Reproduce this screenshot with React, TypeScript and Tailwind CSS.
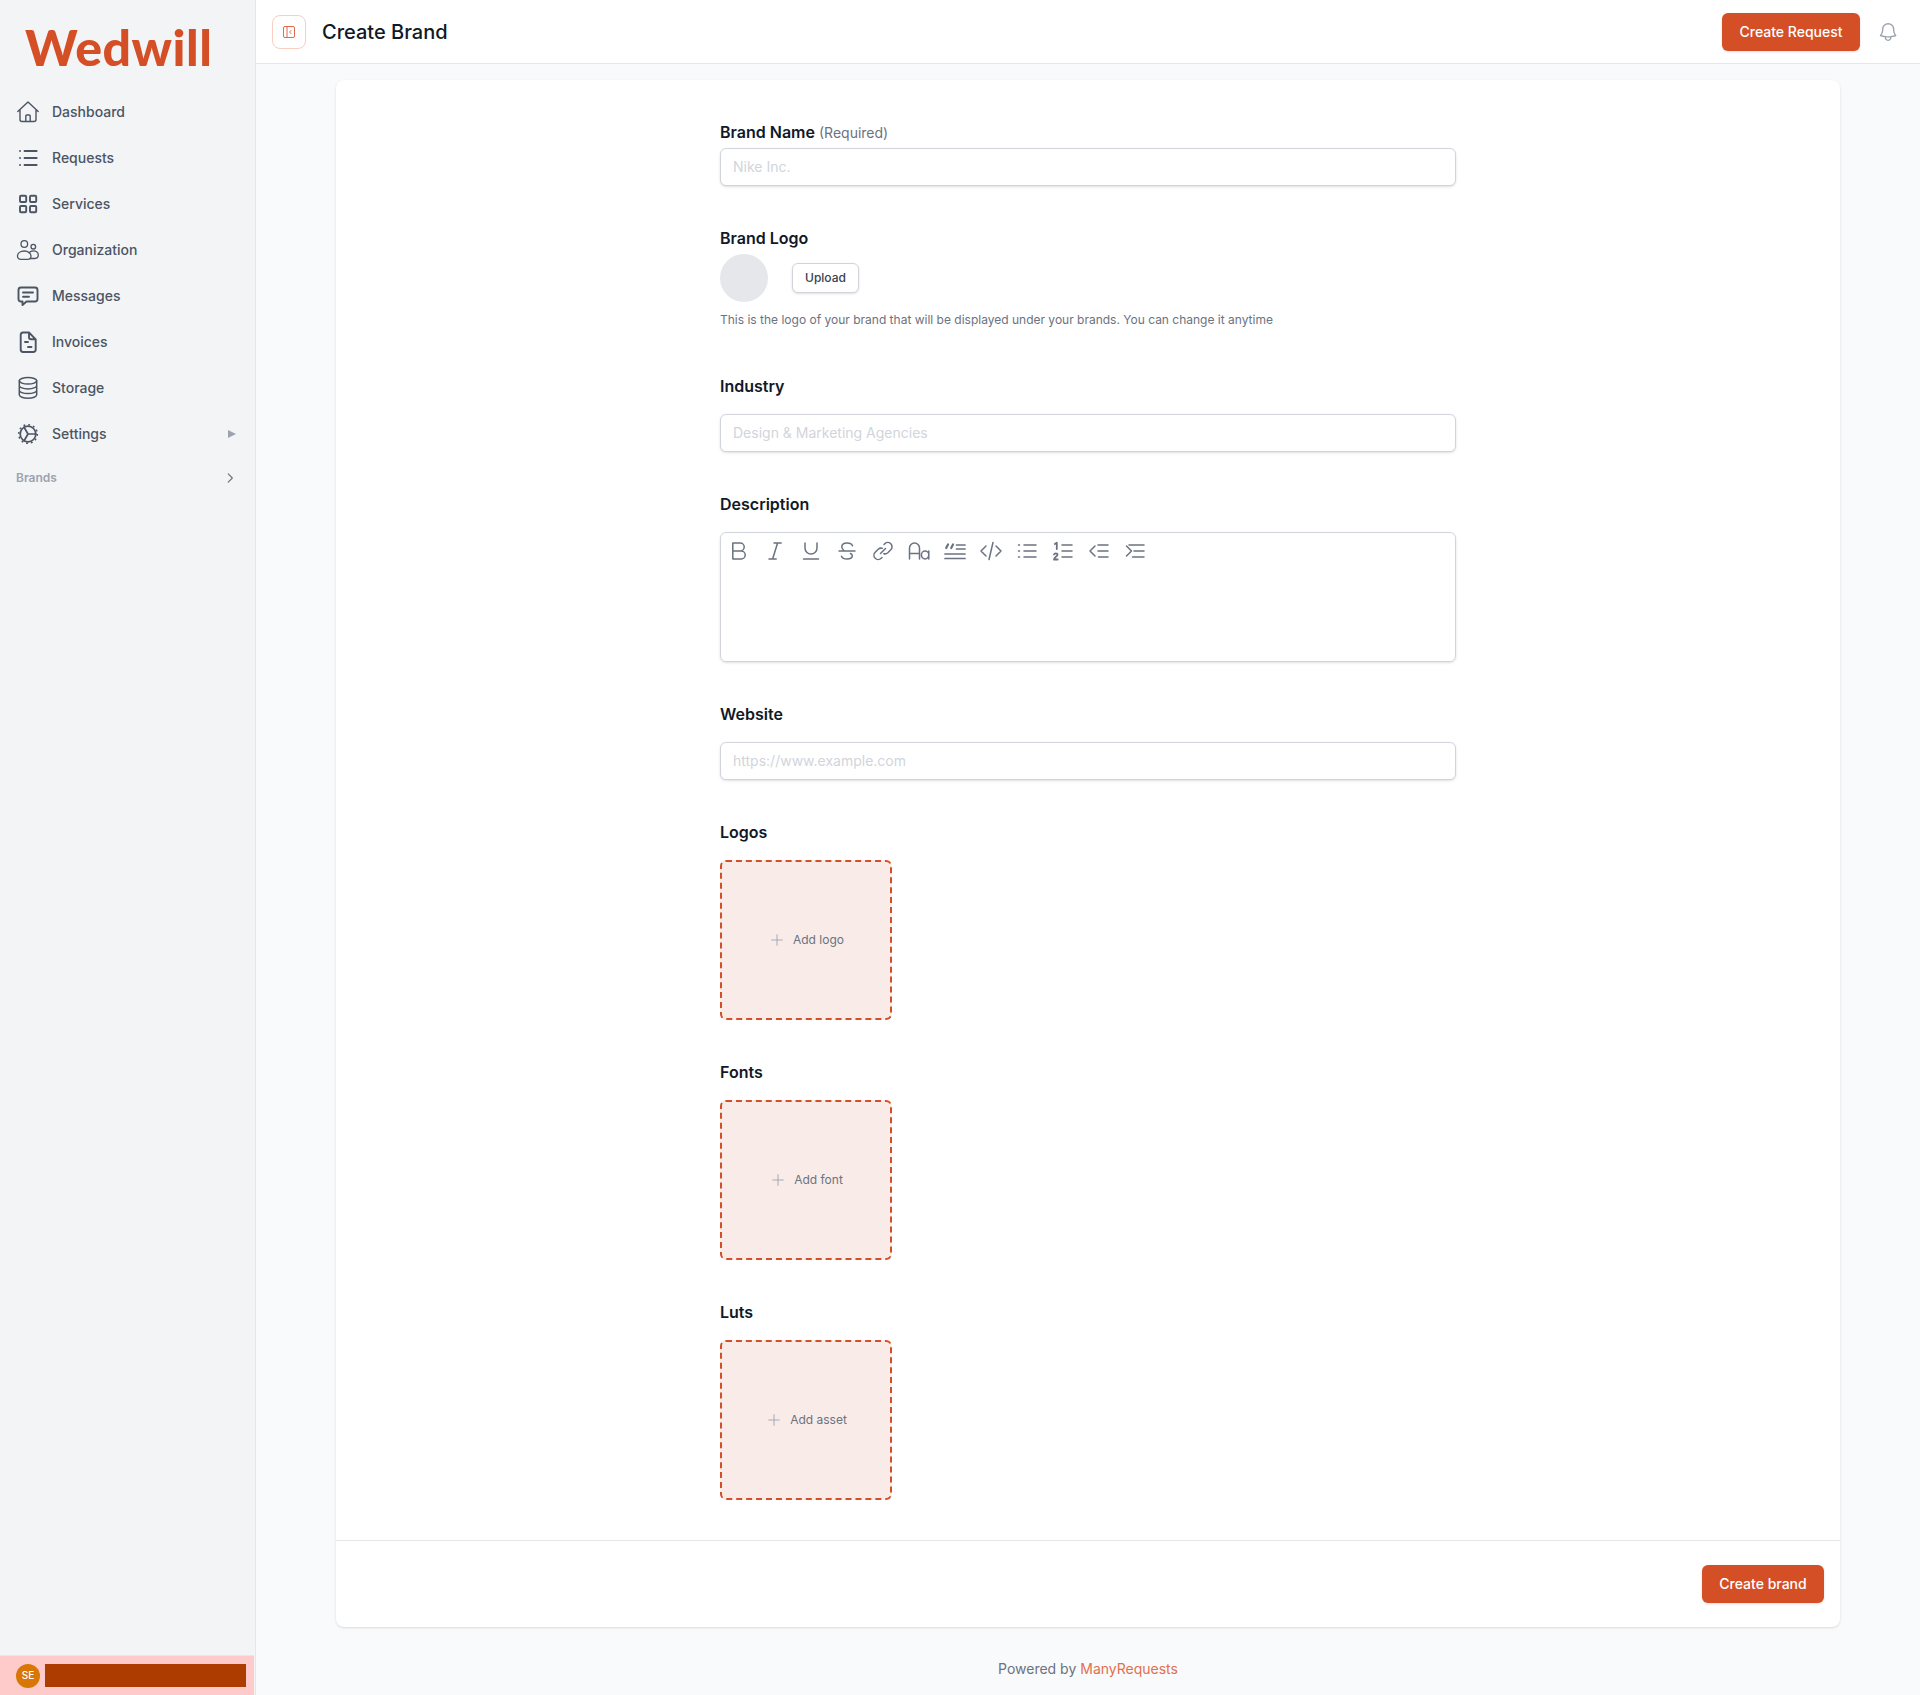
import type { ReactNode } from "react";
import { Plus } from "lucide-react";

const stroke = {
  fill: "none",
  stroke: "currentColor",
  strokeLinecap: "round" as const,
  strokeLinejoin: "round" as const,
};

const Icon = ({ children, className = "w-6 h-6", width = 1.5 }: { children: ReactNode; className?: string; width?: number }) => (
  <svg viewBox="0 0 24 24" className={className} {...stroke} strokeWidth={width}>
    {children}
  </svg>
);

const navItems: { label: string; icon: ReactNode; arrow?: boolean }[] = [
  {
    label: "Dashboard",
    icon: (
      <Icon width={1.4}>
        <path d="M1.800 11.500 12 2l10.200 9.500M4 9.500v10c0 1.100.9 2 2 2h12c1.100 0 2-.9 2-2v-10M9.800 21.500V16c0-.5.4-1 1-1h2.400c.6 0 1 .5 1 1v5.500" />
      </Icon>
    ),
  },
  {
    label: "Requests",
    icon: (
      <Icon width={1.8}>
        <path d="M8.500 5h12.200M8.500 12h12.200M8.500 19h12.200M4 5h.1M4 12h.1M4 19h.1" />
      </Icon>
    ),
  },
  {
    label: "Services",
    icon: (
      <Icon width={1.9}>
        <rect x="4" y="3.800" width="6.200" height="6.200" rx="1" />
        <rect x="14" y="3.800" width="6.200" height="6.200" rx="1" />
        <rect x="4" y="14" width="6.200" height="6.200" rx="1" />
        <rect x="14" y="14" width="6.200" height="6.200" rx="1" />
      </Icon>
    ),
  },
  {
    label: "Organization",
    icon: (
      <Icon width={1.3}>
        <circle cx="8.300" cy="6" r="3.300" />
        <circle cx="17.300" cy="8.700" r="2.300" />
        <path d="M1.500 18.200c0-3 2.800-5.200 6.800-5.200 3.700 0 6.700 2.300 6.700 5.300 0 1.900-1.300 3-3.300 3H5c-2.100 0-3.500-1.200-3.500-3.100Z" />
        <path d="M13 14.700c1-1.100 2.500-1.900 4.300-1.900 2.800 0 5 1.900 5 4.300 0 2-1.300 3.400-3.400 3.400h-4.700" />
      </Icon>
    ),
  },
  {
    label: "Messages",
    icon: (
      <Icon width={1.9}>
        <path d="M5 3.500h14c1.400 0 2.500 1.100 2.500 2.500v9c0 1.400-1.100 2.500-2.500 2.500h-8.500L6.500 21v-3.500H5A2.500 2.500 0 0 1 2.500 15V6C2.500 4.600 3.600 3.500 5 3.500Z" />
        <path d="M7 8.500h10M7 12.800h6" />
      </Icon>
    ),
  },
  {
    label: "Invoices",
    icon: (
      <Icon width={1.9}>
        <path d="M13 2.500H7A2.500 2.500 0 0 0 4.700 5v14.500A2.500 2.500 0 0 0 7 22h10.200a2.500 2.500 0 0 0 2.500-2.500V9.300L13 2.500ZM13 2.500v4.800c0 1.100.9 2 2 2h4.700M9 12h3M12 17h3.500" />
      </Icon>
    ),
  },
  {
    label: "Storage",
    icon: (
      <Icon width={1.5}>
        <ellipse cx="12" cy="4.800" rx="8.700" ry="3.300" />
        <path d="M3.300 4.800v14c0 1.900 3.900 3.400 8.700 3.400s8.700-1.500 8.700-3.400v-14M3.300 9.500c0 1.900 3.900 3.400 8.700 3.400s8.700-1.500 8.700-3.400M3.300 14.200c0 1.900 3.900 3.400 8.700 3.400s8.700-1.500 8.700-3.400" />
      </Icon>
    ),
  },
  {
    label: "Settings",
    icon: (
      <Icon width={1.7}>
        <circle cx="12" cy="12" r="7.800" />
        <circle cx="12" cy="12" r="9.300" strokeDasharray="1.800 3.070" strokeLinecap="butt" strokeWidth={1.600} />
        <path d="M12 12h7.800M12 12 8.100 5.300M12 12l-3.900 6.700" />
      </Icon>
    ),
    arrow: true,
  },
];

const toolbar: ReactNode[] = [
  <path key="b" d="M5.800 4h7.400a4 4 0 0 1 0 8H5.800V4Zm0 8h8.400a4 4 0 0 1 0 8H5.800v-8Z" />,
  <path key="i" d="M11 4h7.200M6 20h7.200M14.600 4 9.600 20" />,
  <path key="u" d="M6 4v5a6 6 0 0 0 12 0V4M4.500 20h15" />,
  <path key="s" d="M17.500 6.800C16.800 5 14.800 4 12 4 9 4 6.800 5.500 6.800 7.800c0 1.700.9 3 2.700 4.200M4 12h16M15.500 14.500c1.200.7 1.800 1.500 1.800 2.300 0 2-2.200 3.200-5.300 3.200-2.800 0-4.800-1-5.500-2.800" />,
  <path key="l" d="M13 5.500l.8-.8a4.200 4.200 0 0 1 6 6l-3 3a4.200 4.200 0 0 1-4 1M11 18.500l-.8.8a4.200 4.200 0 0 1-6-6l3-3a4.200 4.200 0 0 1 4-1M9.500 14.500l5-5" />,
  <path key="a" d="M2.500 20V9a5 5 0 0 1 10 0v11M2.500 14.500h10M21.800 12v8M21.800 16a3.700 3.900 0 1 1-7.400 0 3.700 3.900 0 0 1 7.400 0Z" />,
  <g key="q">
    <path strokeWidth={1.700} d="M13.500 6h8.500M13.500 10h8.500M2 15h20M2 19.500h20" />
    <path strokeWidth={2.200} d="M3.200 9 5 5.500M8.200 9 10 5.500" />
  </g>,
  <path key="c" d="M7 7l-5 5 5 5M17 7l5 5-5 5M14 3.500 10 20.500" />,
  <path key="ul" d="M9 6h12M9 12h12M9 18h12M3.500 6h1M3.500 12h1M3.500 18h1" />,
  <g key="ol">
    <path d="M11 6h10M11 12h10M11 18h10" />
    <path strokeWidth={1.800} d="M3.800 5 5.800 3.700V10M3 15.500c.3-.8 1-1.200 1.800-1.200 1 0 1.700.6 1.700 1.400 0 1.500-3.300 2.500-3.500 4.800h3.700" />
  </g>,
  <path key="o" d="M11 6h10M11 12h10M11.500 18h9.500M8 7l-5 5 5 5" />,
  <path key="in" d="M6 6h15M11 12h10M9.500 18H21M3.500 7l5 5-5 5" />,
];

const Label = ({ children, className = "" }: { children: ReactNode; className?: string }) => (
  <div className={`text-base leading-6 font-semibold text-[#111827] ${className}`}>{children}</div>
);

const TextInput = ({ placeholder }: { placeholder: string }) => (
  <input
    placeholder={placeholder}
    className="block w-full h-[38px] rounded-md border border-[#d1d5db] bg-white px-3 pb-[1px] text-sm text-gray-900 shadow-sm placeholder:text-[#d1d5db] outline-none"
  />
);

const DropBox = ({ label }: { label: string }) => (
  <button className="mt-4 flex items-center justify-center gap-[7px] w-[172px] h-[160px] rounded-md border-2 border-dashed border-[#d44f26] bg-[#f9ece8] text-xs text-[#6b7280]">
    <Plus className="w-[18px] h-[18px] text-[#9ca3af]" strokeWidth={1.2} />
    {label}
  </button>
);

export default function App() {
  return (
    <div className="flex min-h-[1695px] w-[1920px] bg-[#f9fafb] font-['Inter',sans-serif]">
      <aside className="flex w-[256px] shrink-0 flex-col border-r border-[#e5e7eb] bg-[#f3f4f6]">
        <div className="flex h-[89px] items-center pl-[25px] pt-[4px]">
          <span className="font-['Lato',sans-serif] text-[50px] leading-none font-black tracking-[0.5px] text-[#d44f26]">Wedwill</span>
        </div>
        <nav className="flex flex-col">
          {navItems.map((item) => (
            <a key={item.label} className="flex h-[46px] items-center pl-4 pr-[19px] text-sm font-medium text-[#4b5563]">
              <span className="mr-3 text-[#4b5563]">{item.icon}</span>
              <span className="flex-1">{item.label}</span>
              {item.arrow && <span className="h-0 w-0 border-y-[4.500px] border-l-[8px] border-y-transparent border-l-[#9ca3af]" />}
            </a>
          ))}
        </nav>
        <div className="mt-[9px] flex items-center justify-between pl-4 pr-[18px] text-xs font-semibold text-[#9ca3af] leading-6">
          Brands
          <svg viewBox="0 0 24 24" className="w-[14px] h-[14px] text-[#6b7280]" {...stroke} strokeWidth={2}>
            <path d="m9 5 7 7-7 7" />
          </svg>
        </div>
        <div className="mt-auto mr-px flex h-[40px] items-center gap-[5px] border-t border-[#e5e7eb] bg-[#fecaca] pl-4 pr-2">
          <span className="flex h-6 w-6 shrink-0 items-center justify-center rounded-full bg-[#d97706] text-[10px] font-medium text-white">SE</span>
          <span className="h-[23px] flex-1 bg-[#ad3c00]" />
        </div>
      </aside>

      <div className="flex min-w-0 flex-1 flex-col">
        <header className="flex h-[64px] items-center border-b border-[#e5e7eb] bg-white pl-4 pr-[21px]">
          <button className="flex h-[34px] w-[34px] items-center justify-center rounded-lg border border-[#f8cfc1] text-[#e0694a]">
            <svg viewBox="0 0 12 12" className="w-3 h-3" {...stroke} strokeWidth={1}>
              <rect x=".5" y=".5" width="11" height="11" rx="1.500" />
              <path d="M4 .5v11M8 4.500 6.500 6 8 7.500" />
            </svg>
          </button>
          <h1 className="ml-4 flex-1 text-xl font-medium text-[#111827]">Create Brand</h1>
          <button className="h-[38px] w-[138px] rounded-md bg-[#d44f26] text-sm font-medium text-white shadow-sm">Create Request</button>
          <svg viewBox="0 0 24 24" className="ml-[17px] w-[22px] h-[22px] text-[#9ca3af]" {...stroke} strokeWidth={1.500}>
            <path d="M14.900 17.100a24 24 0 0 0 5.500-1.300 9 9 0 0 1-2.200-5.800V9a6 6 0 1 0-12 0v1a9 9 0 0 1-2.400 5.800 24 24 0 0 0 5.500 1.300m5.600 0a24 24 0 0 1-5.600 0m5.600 0a3 3 0 1 1-5.600 0" />
          </svg>
        </header>

        <main className="flex flex-1 flex-col items-center px-[80px] pt-4">
          <div className="w-full rounded-lg bg-white shadow-sm">
            <div className="mx-auto flex w-[736px] flex-col pt-[40px] pb-[40px]">
              <Label>
                Brand Name <span className="text-sm font-normal text-[#6b7280]">(Required)</span>
              </Label>
              <div className="mt-[4px]">
                <TextInput placeholder="Nike Inc." />
              </div>

              <Label className="mt-[40px]">Brand Logo</Label>
              <div className="mt-[4px] flex items-center">
                <span className="h-12 w-12 rounded-full bg-[#e5e7eb]" />
                <button className="ml-6 h-[30px] w-[67px] rounded-md border border-[#d1d5db] bg-white text-xs font-medium text-[#374151] shadow-sm">Upload</button>
              </div>
              <p className="mt-[8px] text-xs leading-5 text-[#6b7280]">This is the logo of your brand that will be displayed under your brands. You can change it anytime</p>

              <Label className="mt-[44px]">Industry</Label>
              <div className="mt-[16px]">
                <TextInput placeholder="Design & Marketing Agencies" />
              </div>

              <Label className="mt-[40px]">Description</Label>
              <div className="mt-[16px] h-[130px] rounded-md border border-[#d1d5db] shadow-sm">
                <div className="flex gap-1 px-[2px] pt-[2px] text-[#6b7280]">
                  {toolbar.map((glyph, i) => (
                    <span key={i} className="flex h-8 w-8 items-center justify-center">
                      <Icon className="w-6 h-6 shrink-0" width={1.500}>{glyph}</Icon>
                    </span>
                  ))}
                </div>
              </div>

              <Label className="mt-[40px]">Website</Label>
              <div className="mt-[16px]">
                <TextInput placeholder="https://www.example.com" />
              </div>

              <Label className="mt-[40px]">Logos</Label>
              <DropBox label="Add logo" />
              <Label className="mt-[40px]">Fonts</Label>
              <DropBox label="Add font" />
              <Label className="mt-[40px]">Luts</Label>
              <DropBox label="Add asset" />
            </div>
            <div className="flex h-[87px] items-center justify-end border-t border-[#e5e7eb] px-4">
              <button className="h-[38px] w-[122px] rounded-md bg-[#d44f26] text-sm font-medium text-white shadow-sm">Create brand</button>
            </div>
          </div>
          <p className="mt-[32px] text-sm text-[#6b7280]">
            Powered by <span className="text-[#e0704f]">ManyRequests</span>
          </p>
        </main>
      </div>
    </div>
  );
}
